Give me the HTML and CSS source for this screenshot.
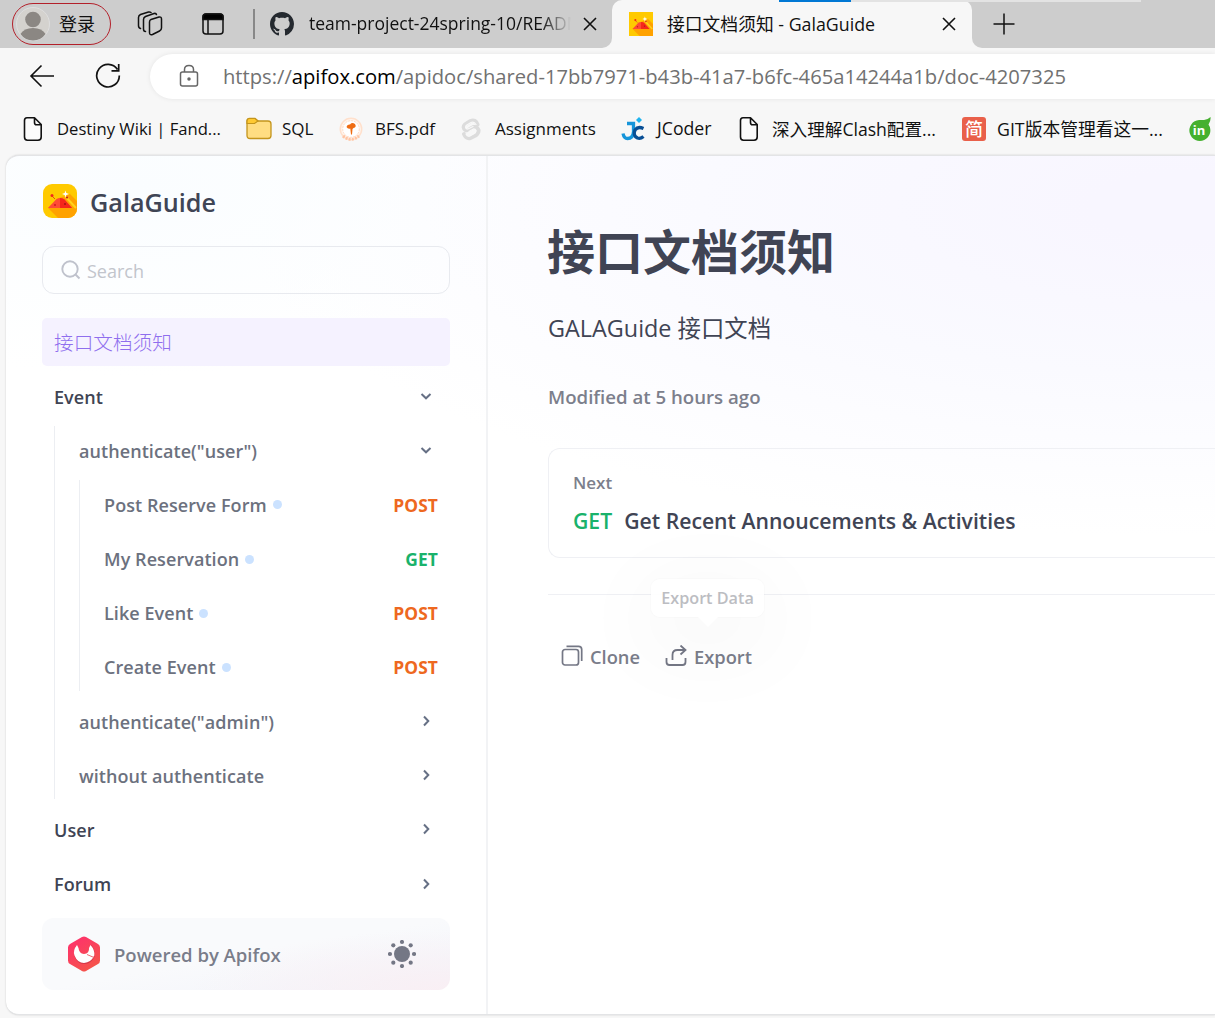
FILE: index.html
```html
<!DOCTYPE html>
<html lang="zh-CN">
<head>
<meta charset="utf-8">
<title>接口文档须知 - GalaGuide</title>
<link rel="stylesheet" href="styles.css">
</head>
<body>
<svg class="defs" width="0" height="0">
  <symbol id="gala" viewBox="0 0 34 34">
    <rect width="34" height="34" fill="#ffca00"/>
    <path d="M5 24 L16 14 L27 10 L34 17 V34 H15Z" fill="#ffa200"/>
    <path d="M22 12 L33 24" stroke="#ffd21c" stroke-width="2"/>
    <path d="M5 24 L13.500 15 Q17 13 21 15 L29 24Z" fill="#ff4a35"/>
    <path d="M17 14 Q20 14 21.500 15.500 L29 24 H17Z" fill="#f5271b"/>
    <path d="M9 12 L12 15" stroke="#e6451b" stroke-width="1"/>
    <circle cx="9" cy="11.500" r="1.500" fill="#f2281c"/><circle cx="12" cy="21" r="1" fill="#c8201c"/><circle cx="22" cy="20" r="1" fill="#a51414"/><circle cx="24" cy="13.500" r="1.100" fill="#c8201c"/>
    <path d="M22.500 6.500 L23.300 9 L26 10 L23.300 11 L22.500 13.500 L21.700 11 L19 10 L21.700 9Z" fill="#fff"/>
  </symbol>
  <symbol id="page" viewBox="0 0 20 26">
    <path d="M4 1.800 H11.500 L18.200 8.500 V21 Q18.200 24.200 15 24.200 H4.500 Q1.500 24.200 1.500 21 V4.500 Q1.500 1.800 4 1.800Z M11.500 2 V6.500 Q11.500 8.800 13.500 8.800 H18" fill="#fbfbfb" stroke="#111" stroke-width="1.600" stroke-linejoin="round"/>
  </symbol>
  <symbol id="down" viewBox="0 0 12 12"><path d="M1.500 4 L6 8.300 L10.500 4" fill="none" stroke="#667085" stroke-width="2"/></symbol>
  <symbol id="right" viewBox="0 0 12 12"><path d="M4 1.500 L8.300 6 L4 10.500" fill="none" stroke="#667085" stroke-width="2"/></symbol>
  <symbol id="close" viewBox="0 0 14 14"><path d="M1 1 L13 13 M13 1 L1 13" stroke="#111" stroke-width="1.600"/></symbol>
</svg>

<header class="browser">
  <div class="tabstrip">
    <div class="strip-left">
      <div class="profile">
        <svg width="34" height="34" viewBox="0 0 34 34"><circle cx="17" cy="17" r="16.500" fill="#d4d2ce" stroke="#dedede"/><circle cx="17" cy="12.500" r="7.800" fill="#8b8783"/><path d="M4.500 27 Q8 21 17 21 Q26 21 29.500 27 Q25 33.500 17 33.500 Q9 33.500 4.500 27Z" fill="#8b8783"/></svg>
        <span>登录</span>
      </div>
      <svg class="workspaces" width="26" height="26" viewBox="0 0 26 26" fill="none" stroke="#111" stroke-width="1.500" stroke-linejoin="round" stroke-linecap="round"><path d="M14 8.500 L22 6 Q24.500 5.500 24.500 8 V17 Q24.500 19 22.500 20 L15.500 23.500 Q12.500 24.500 12.500 21.500 V11 Q12.500 9 14 8.500Z"/><path d="M8.500 20.500 Q6.500 20.500 6.500 18 V8.500 Q6.500 6.500 8.500 5.500 L17 2.500 Q19 2 19.500 3.500"/><path d="M3.500 17.500 Q1.500 17 1.500 14.500 V6.500 Q1.500 4.500 3.500 3.500 L11.500 1 Q13 .700 14 1.500"/></svg>
      <svg class="tab-actions" width="22" height="22" viewBox="0 0 22 22" fill="none" stroke="#111" stroke-width="1.500"><rect x="1" y="1" width="20" height="20" rx="3"/><path d="M1 6.500 V4 Q1 1 4 1 H18 Q21 1 21 4 V6.500Z" fill="#000"/><path d="M6 6 V21"/></svg>
      <i class="sep"></i>
      <svg class="github" width="24" height="24" viewBox="0 0 16 16"><path fill="#24292f" d="M8 0C3.580 0 0 3.580 0 8c0 3.540 2.290 6.530 5.470 7.590.4.070.55-.17.55-.38 0-.19-.01-.82-.01-1.490-2.010.37-2.530-.49-2.690-.94-.09-.23-.48-.94-.82-1.130-.28-.15-.68-.52-.01-.53.63-.01 1.080.58 1.230.82.72 1.210 1.870.87 2.330.66.070-.52.28-.87.510-1.070-1.780-.2-3.640-.89-3.640-3.950 0-.87.310-1.590.82-2.150-.08-.2-.36-1.020.08-2.120 0 0 .67-.21 2.200.82.640-.18 1.320-.27 2-.27s1.360.09 2 .27c1.530-1.040 2.200-.82 2.200-.82.440 1.100.160 1.920.080 2.120.510.560.820 1.270.820 2.150 0 3.070-1.870 3.750-3.650 3.950.290.250.540.730.540 1.480 0 1.070-.01 1.930-.01 2.200 0 .210.150.460.550.380A8.010 8.010 0 0 0 16 8c0-4.420-3.580-8-8-8z"/></svg>
      <span class="tab-text faded">team-project-24spring-10/READM</span>
      <svg width="14" height="14"><use href="#close"/></svg>
    </div>
    <div class="tab-slot"><div class="tab">
      <svg width="24" height="24"><use href="#gala"/></svg>
      <span class="tab-text title-tab">接口文档须知 - GalaGuide</span>
      <svg width="14" height="14"><use href="#close"/></svg>
    </div></div>
    <div class="strip-right">
      <svg width="22" height="22" viewBox="0 0 22 22"><path d="M11 .500 V21.500 M.500 11 H21.500" stroke="#111" stroke-width="1.500"/></svg>
    </div>
    <i class="progress"></i>
  </div>

  <div class="toolbar">
    <svg class="back" width="26" height="24" viewBox="0 0 26 24" fill="none" stroke="#111" stroke-width="1.600"><path d="M12.500 1.500 L2 12 L12.500 22.500 M2 12 H25"/></svg>
    <svg class="reload" width="26" height="26" viewBox="0 0 26 26" fill="none" stroke="#111" stroke-width="1.700"><path d="M22.500 6.500 A11.300 11.300 0 1 0 24.300 12.500 M23.700 1 V7.800 H16.500"/></svg>
    <div class="address">
      <svg width="20" height="24" viewBox="0 0 20 24" fill="none" stroke="#666" stroke-width="1.500"><rect x="1.500" y="8" width="17" height="14" rx="2"/><path d="M5.500 8 V5.500 Q5.500 1.500 10 1.500 Q14.500 1.500 14.500 5.500 V8"/><circle cx="10" cy="15" r="1" fill="#555"/></svg>
      <span class="url">https://<b>apifox.com</b>/apidoc/shared-17bb7971-b43b-41a7-b6fc-465a14244a1b/doc-4207325</span>
    </div>
  </div>

  <nav class="bookmarks">
    <a class="b1"><svg width="20" height="26"><use href="#page"/></svg><span>Destiny Wiki | Fand...</span></a>
    <a class="b2"><svg width="26" height="24" viewBox="0 0 26 24"><path d="M1 4 Q1 1.500 3.500 1.500 H9 L12 4 H22 Q25 4 25 7 V18.500 Q25 21.500 22 21.500 H4 Q1 21.500 1 18.500Z" fill="#ffdd82" stroke="#c4951c" stroke-width="1.300"/><path d="M1 6.500 H8.500 L12 4 L9 1.500 H3.500 Q1 1.500 1 4Z" fill="#ffc932" stroke="#c4951c" stroke-width="1.200"/></svg><span>SQL</span></a>
    <a class="b3"><svg width="24" height="24" viewBox="0 0 24 24"><circle cx="12" cy="12" r="10.700" fill="#fff6ef" stroke="#ffe0cc" stroke-width="1.500"/><circle cx="12" cy="12" r="8.300" fill="#fff" stroke="#ffdcc6" stroke-dasharray="2 1"/><path d="M7.500 10 Q8 7 11 7.500 Q13 5 16 7 Q18 10 14.500 11 L13.500 12 L13 17.500 H12 L11.300 11.500 Q9 12.500 7.500 10Z" fill="#ef6c12"/><path d="M4 19 Q12 25.500 20 19" fill="none" stroke="#ffc4a3" stroke-width="3" stroke-dasharray="2 1.200"/></svg><span>BFS.pdf</span></a>
    <a class="b4"><svg width="20" height="24" viewBox="0 0 20 24" fill="none" stroke-linecap="round" stroke-linejoin="round"><path d="M16.500 7.500 Q14.500 2 9.500 4 L4 7.500 Q1 10.500 4.500 13 Q6.500 14 9 12 L12.500 10 Q16 9.500 17.500 13 Q18 16 14.500 18.500 L9.500 21 Q5 22 3 17" stroke="#dcdcdc" stroke-width="4"/><path d="M15 7.500 Q13 4 10 5.500 L5.500 8.300 Q3.500 10.500 6 12 Q7.500 12 9 11 L12 9.500 M8 14.500 L12.500 12 Q16.500 12.500 14 16 L8.500 19.200 Q6 19.500 5 17" stroke="#f8f8f8" stroke-width="1.300"/></svg><span>Assignments</span></a>
    <a class="b5"><svg width="24" height="24" viewBox="0 0 24 24" fill="none"><path d="M6 6.500 H12.500 V15 Q12 21.500 6.500 21.500 Q3 21.500 2 16.500" stroke="#1695da" stroke-width="3.300"/><path d="M22.500 11.500 Q17 9 14 13 Q11.500 18.500 16.500 21 Q19.500 22 22.500 19.500" stroke="#084f95" stroke-width="3.300"/><path d="M18 0 L21 3 L18 6 L15 3Z" fill="#1fb4ef"/></svg><span>JCoder</span></a>
    <a class="b6"><svg width="20" height="26"><use href="#page"/></svg><span>深入理解Clash配置...</span></a>
    <a class="b7"><i class="jian">简</i><span>GIT版本管理看这一...</span></a>
    <a class="b8"><svg width="24" height="24" viewBox="0 0 24 24"><path d="M11 3 H16 Q20 2.500 22.500 0 Q23 4 20.500 7.500 A10.500 10.500 0 1 1 11 3Z" fill="#45b02f"/><text x="11" y="18" text-anchor="middle" class="in">in</text></svg></a>
  </nav>
</header>

<main class="site">
  <aside class="sidebar">
    <div class="brand"><svg width="34" height="34"><use href="#gala"/></svg><span>GalaGuide</span></div>
    <div class="search"><svg width="20" height="20" viewBox="0 0 20 20" fill="none" stroke="#bfc2cc" stroke-width="1.900"><circle cx="9" cy="9" r="7.700"/><path d="M14.500 14.500 L18.500 18.500"/></svg><span>Search</span></div>
    <div class="row active"><span>接口文档须知</span></div>
    <div class="row top"><span>Event</span><svg width="12" height="12"><use href="#down"/></svg></div>
    <div class="group">
      <div class="row"><span>authenticate("user")</span><svg width="12" height="12"><use href="#down"/></svg></div>
      <div class="group inner">
        <div class="row"><span>Post Reserve Form</span><i class="dot"></i><b class="post">POST</b></div>
        <div class="row"><span>My Reservation</span><i class="dot"></i><b class="get">GET</b></div>
        <div class="row"><span>Like Event</span><i class="dot"></i><b class="post">POST</b></div>
        <div class="row"><span>Create Event</span><i class="dot"></i><b class="post">POST</b></div>
      </div>
      <div class="row"><span>authenticate("admin")</span><svg width="12" height="12"><use href="#right"/></svg></div>
      <div class="row"><span>without authenticate</span><svg width="12" height="12"><use href="#right"/></svg></div>
    </div>
    <div class="row top"><span>User</span><svg width="12" height="12"><use href="#right"/></svg></div>
    <div class="row top"><span>Forum</span><svg width="12" height="12"><use href="#right"/></svg></div>
    <div class="powered">
      <svg width="34" height="36" viewBox="0 0 34 36"><defs><linearGradient id="fox" x1="0" y1="0" x2=".6" y2="1"><stop offset="0" stop-color="#ff2e70"/><stop offset="1" stop-color="#f5534b"/></linearGradient></defs><path d="M15 1 Q17 0 19 1 L31 8 Q33 9 33 11.500 V24.500 Q33 27 31 28 L19 35 Q17 36 15 35 L3 28 Q1 27 1 24.500 V11.500 Q1 9 3 8Z" fill="url(#fox)"/><path d="M9 10 Q5.500 17 8.500 22.500 Q12 28.500 18 28 Q24 27.500 27.500 21 Q28.500 15 24.500 9 L22 13 Q21.500 18 17 18.500 Q12.500 18 12 14Z" fill="#b6283d" opacity=".5"/><path d="M10 9 Q5.500 14.500 7.500 19.500 Q10.500 27 17 27 Q24 26.500 27.300 19.500 Q28 14 23.500 9 L22 12 Q22.500 17.500 17 18 Q12 17.500 11.500 12Z" fill="#fff"/><path d="M20 18.500 L27 21.500" stroke="#ef6670" stroke-width="1"/></svg>
      <span>Powered by Apifox</span>
      <svg class="sun" width="28" height="28" viewBox="-14 -14 28 28" fill="#747785"><circle r="8"/><circle cx="0" cy="-12" r="2.100"/><circle cx="0" cy="12" r="2.100"/><circle cx="-12" cy="0" r="2.100"/><circle cx="12" cy="0" r="2.100"/><circle cx="-8.700" cy="-8.700" r="2.100"/><circle cx="8.700" cy="-8.700" r="2.100"/><circle cx="-8.700" cy="8.700" r="2.100"/><circle cx="8.700" cy="8.700" r="2.100"/></svg>
    </div>
  </aside>
  <article class="doc">
    <h1>接口文档须知</h1>
    <p class="lead">GALAGuide 接口文档</p>
    <p class="modified">Modified at 5 hours ago</p>
    <a class="next"><span class="label">Next</span><span class="target"><em>GET</em><span>Get Recent Annoucements &amp; Activities</span></span></a>
    <footer class="actions">
      <a class="clone"><svg width="22" height="22" viewBox="0 0 22 22" fill="none" stroke="#747785" stroke-width="1.700"><rect x="1.500" y="4.500" width="16" height="15.500" rx="2.500"/><path d="M5.500 1.300 H17.500 Q20.700 1.300 20.700 4.500 V16"/></svg><span>Clone</span></a>
      <a class="export"><svg width="22" height="22" viewBox="0 0 22 22" fill="none" stroke="#747785" stroke-width="1.800"><path d="M1.500 13 V17 Q1.500 20 4.500 20 H17.500 Q20.500 20 20.500 17 V13"/><path d="M7.500 15 V10 Q7.500 5 12.500 5 H19.500 M15.500 .500 L20.500 5 L15.500 9.500"/></svg><span>Export</span><span class="tip">Export Data</span></a>
    </footer>
  </article>
</main>
</body>
</html>
```

FILE: styles.css
```css
* { box-sizing: border-box; }
body {
  margin: 0;
  width: 1215px;
  height: 1018px;
  overflow: hidden;
  background: #f7f7f7;
  color: #111;
  font-family: "Open Sans", "Noto Sans CJK SC", sans-serif;
  font-size: 18px;
  white-space: nowrap;
}
.defs { position: absolute; }
svg { flex: none; display: block; }
i, em { font-style: normal; }

/* Browser chrome */
.browser { height: 155px; }
.tabstrip { position: relative; display: flex; height: 48px; }
.strip-left {
  display: flex;
  align-items: center;
  width: 612px;
  padding-left: 12px;
  background: #cdcdcd;
  border-bottom-right-radius: 10px;
}
.profile {
  display: flex;
  align-items: center;
  gap: 9px;
  width: 99px;
  height: 42px;
  padding-left: 3px;
  border: 1.500px solid #b3202a;
  border-radius: 21px;
}
.profile span { margin-top: -3px; }
.workspaces { margin-left: 26px; }
.tab-actions { margin-left: 39px; }
.sep { width: 2px; height: 30px; margin: 0 15px 0 29px; background: #888; }
.tab-text { margin-top: -2px; font-size: 17.500px; }
.faded {
  width: 262px;
  margin: -2px 12px 0 15px;
  overflow: hidden;
  -webkit-mask-image: linear-gradient(90deg, #000 232px, transparent 262px);
  mask-image: linear-gradient(90deg, #000 232px, transparent 262px);
}
.tab-slot { width: 360px; background: #cdcdcd; }
.tab {
  display: flex;
  align-items: center;
  height: 48px;
  padding: 0 16px 0 17px;
  border-radius: 10px 10px 0 0;
  background: #f7f7f7;
}
.title-tab { flex: 1; margin-left: 14px; font-size: 17.800px; }
.strip-right {
  display: flex;
  align-items: center;
  flex: 1;
  padding-left: 21px;
  background: #cdcdcd;
  border-bottom-left-radius: 10px;
}
.progress {
  position: absolute;
  left: 779px;
  top: 0;
  width: 362px;
  height: 2px;
  background: linear-gradient(90deg, #0078d4 72px, #e3e3e3 72px);
}
.toolbar { display: flex; align-items: center; height: 56px; padding-left: 29px; }
.reload { margin: 0 42px 0 40px; }
.address {
  display: flex;
  align-items: center;
  flex: 1;
  height: 45px;
  margin-left: -13px;
  padding-left: 29px;
  border-radius: 23px 0 0 23px;
  background: #fff;
  box-shadow: 0 0 5px rgba(0, 0, 0, .08);
}
.url { margin-left: 24px; font-size: 20.180px; color: #717171; }
.url b { font-weight: 400; color: #000; }
.bookmarks { display: grid; grid-template-columns: 223px 93px 122px 160px 118px 223px 226px 27px; align-items: center; height: 50px; padding-left: 23px; font-size: 17px; }
.bookmarks a { display: flex; align-items: center; gap: 14px; }
.bookmarks a span { margin-top: -2px; }
.bookmarks .b1 { font-size: 16.650px; }
.bookmarks .b2 { gap: 10px; }
.bookmarks .b3 { gap: 12px; }
.bookmarks .b5 { gap: 12px; font-size: 17.700px; }
.bookmarks .b6 { gap: 13px; font-size: 17.600px; }
.bookmarks .b7 { gap: 11px; font-size: 17.750px; }
.jian { display: grid; place-items: center; width: 24px; height: 24px; border-radius: 3px; background: #e9604a; color: #fff; font-size: 18px; font-weight: 500; line-height: 24px; }
.in { font: 700 13px "Open Sans", sans-serif; fill: #fff; }

/* Documentation site */
.site {
  display: flex;
  height: 860px;
  margin-left: 6px;
  border: 1px solid #e3e4e6;
  border-width: 1px 0 1px 0;
  border-radius: 13px 0 0 13px;
  box-shadow: 0 0 2px rgba(0, 0, 0, .18);
  background:
    radial-gradient(ellipse 420px 190px at 130px 30px, #fafdff, rgba(252, 253, 255, 0)),
    radial-gradient(ellipse 950px 330px at 1180px 50px, #f8f6ff 10%, rgba(249, 249, 255, .85) 50%, rgba(255, 255, 255, 0)),
    #fff;
  color: #667085;
  font-weight: 600;
}
.sidebar { width: 482px; padding: 28px 36px 0 36px; border-right: 2px solid #f2f3f5; }
.brand { display: flex; align-items: center; gap: 13px; height: 34px; padding-left: 1px; font-size: 25.200px; color: #3f4555; }
.brand span { margin-top: 1px; }
.brand svg { border-radius: 9px; }
.search {
  display: flex;
  align-items: center;
  gap: 6px;
  height: 48px;
  margin: 28px 0 24px;
  padding-left: 18px;
  border: 1px solid #e8eaef;
  border-radius: 12px;
  color: #c2c5cc;
  font-weight: 400;
}
.search span { margin-top: 1px; }
.row { display: flex; align-items: center; height: 48px; margin-bottom: 6.170px; padding: 0 12px; color: #6c717e; letter-spacing: .07px; }
.row span, .row b, .dot { margin-top: 1px; }
.row svg { margin-left: auto; margin-right: 6px; }
.row b { margin-left: auto; font-size: 17.400px; font-weight: 700; letter-spacing: .1px; }
.row.active { border-radius: 5px; background: #f5f2ff; color: #8f6eee; font-weight: 300; font-size: 19.600px; }
.row.active span { margin-top: -1px; }
.row.top { color: #404454; }
.group { margin: 0 0 6.170px 12px; border-left: 1px solid #eceef2; }
.inner { margin-left: 24px; }
.group > .row { padding-left: 24px; }
.group > .row:last-child { margin-bottom: 0; }
.dot { width: 9px; height: 9px; margin-left: 6px; border-radius: 50%; background: #cbe2ff; }
.post { color: #ee6820; }
.get { color: #19b26b; }
.powered {
  display: flex;
  align-items: center;
  height: 72px;
  margin-top: 10px;
  padding: 0 34px 0 25px;
  border-radius: 12px;
  background: radial-gradient(ellipse 260px 60px at 100% 100%, #f9eff4, rgba(246, 243, 249, 0)), linear-gradient(170deg, #f9fafc 50%, #f2f4fa);
  color: #7a7d8a;
}
.powered span { margin: 1px 0 0 13px; font-size: 18.500px; }
.sun { margin-left: auto; }
.doc { flex: 1; padding: 60px 0 0 60px; }
h1 { margin: 0 0 0 -1px; height: 72px; line-height: 72px; font-size: 48px; font-weight: 700; color: #404454; }
.lead { margin: 22px 0 0; height: 36px; line-height: 36px; font-size: 23.400px; font-weight: 400; color: #404454; }
.modified { margin: 37px 0 0; height: 28px; line-height: 28px; font-size: 18.650px; color: #7c7f8c; }
.next {
  display: flex;
  flex-direction: column;
  height: 110px;
  margin-top: 37px;
  padding: 20px 24px;
  border: 1px solid #eff0f4;
  border-right: 0;
  border-radius: 12px 0 0 12px;
}
.label { height: 28px; line-height: 28px; font-size: 17px; color: #7c7f8c; }
.target { display: flex; gap: 12px; margin-top: 6px; height: 36px; line-height: 36px; font-size: 21.200px; color: #404454; }
.target em { color: #19b26b; }
.actions { display: flex; gap: 25px; margin-top: 36px; padding: 47px 0 0 13px; border-top: 1px solid #eff0f4; font-size: 18.300px; color: #7a7d8a; }
.actions a { position: relative; display: flex; align-items: center; gap: 7px; height: 28px; }
.tip {
  position: absolute;
  left: -14px;
  top: -63px;
  width: 113px;
  height: 38px;
  border-radius: 9px;
  background: rgba(255, 255, 255, .9);
  box-shadow: 0 20px 90px 10px rgba(0, 0, 0, .045), 0 0 2px rgba(0, 0, 0, .05);
  text-align: center;
  line-height: 39px;
  font-size: 16.200px;
  color: #bcbdc2;
}
.tip::after { content: ""; position: absolute; left: 47px; top: 38px; border: 10px solid transparent; border-top-color: #fff; border-bottom: 0; }
```
